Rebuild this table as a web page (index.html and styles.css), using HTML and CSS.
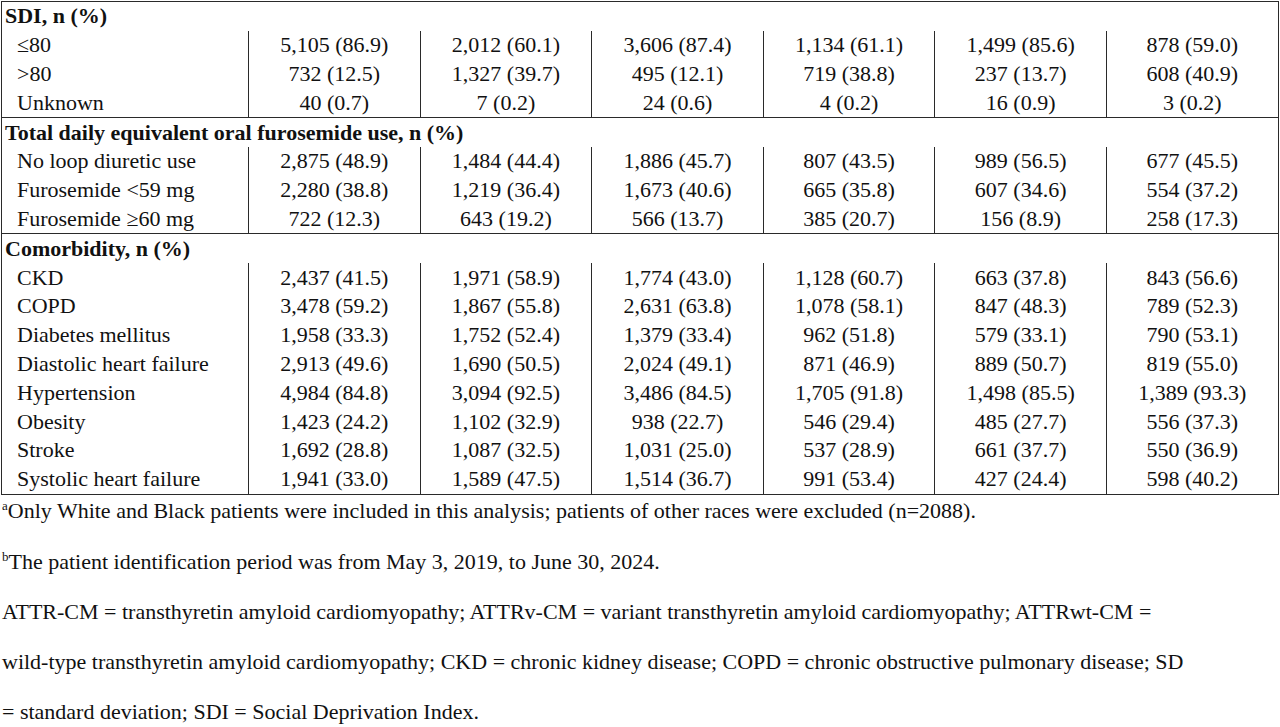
FILE: index.html
```html
<!DOCTYPE html>
<html>
<head>
<meta charset="utf-8">
<link rel="stylesheet" href="styles.css">
</head>
<body>
<table class="data">
<colgroup>
<col class="c-label"><col class="c-num"><col class="c-num"><col class="c-num"><col class="c-num"><col class="c-num"><col class="c-num">
</colgroup>
<tbody>
<tr class="sec first"><td colspan="7">SDI, n (%)</td></tr>
<tr><td class="lab">≤80</td><td>5,105 (86.9)</td><td>2,012 (60.1)</td><td>3,606 (87.4)</td><td>1,134 (61.1)</td><td>1,499 (85.6)</td><td>878 (59.0)</td></tr>
<tr><td class="lab">&gt;80</td><td>732 (12.5)</td><td>1,327 (39.7)</td><td>495 (12.1)</td><td>719 (38.8)</td><td>237 (13.7)</td><td>608 (40.9)</td></tr>
<tr><td class="lab">Unknown</td><td>40 (0.7)</td><td>7 (0.2)</td><td>24 (0.6)</td><td>4 (0.2)</td><td>16 (0.9)</td><td>3 (0.2)</td></tr>
<tr class="sec"><td colspan="7">Total daily equivalent oral furosemide use, n (%)</td></tr>
<tr><td class="lab">No loop diuretic use</td><td>2,875 (48.9)</td><td>1,484 (44.4)</td><td>1,886 (45.7)</td><td>807 (43.5)</td><td>989 (56.5)</td><td>677 (45.5)</td></tr>
<tr><td class="lab">Furosemide &lt;59 mg</td><td>2,280 (38.8)</td><td>1,219 (36.4)</td><td>1,673 (40.6)</td><td>665 (35.8)</td><td>607 (34.6)</td><td>554 (37.2)</td></tr>
<tr><td class="lab">Furosemide ≥60 mg</td><td>722 (12.3)</td><td>643 (19.2)</td><td>566 (13.7)</td><td>385 (20.7)</td><td>156 (8.9)</td><td>258 (17.3)</td></tr>
<tr class="sec"><td colspan="7">Comorbidity, n (%)</td></tr>
<tr><td class="lab">CKD</td><td>2,437 (41.5)</td><td>1,971 (58.9)</td><td>1,774 (43.0)</td><td>1,128 (60.7)</td><td>663 (37.8)</td><td>843 (56.6)</td></tr>
<tr><td class="lab">COPD</td><td>3,478 (59.2)</td><td>1,867 (55.8)</td><td>2,631 (63.8)</td><td>1,078 (58.1)</td><td>847 (48.3)</td><td>789 (52.3)</td></tr>
<tr><td class="lab">Diabetes mellitus</td><td>1,958 (33.3)</td><td>1,752 (52.4)</td><td>1,379 (33.4)</td><td>962 (51.8)</td><td>579 (33.1)</td><td>790 (53.1)</td></tr>
<tr><td class="lab">Diastolic heart failure</td><td>2,913 (49.6)</td><td>1,690 (50.5)</td><td>2,024 (49.1)</td><td>871 (46.9)</td><td>889 (50.7)</td><td>819 (55.0)</td></tr>
<tr><td class="lab">Hypertension</td><td>4,984 (84.8)</td><td>3,094 (92.5)</td><td>3,486 (84.5)</td><td>1,705 (91.8)</td><td>1,498 (85.5)</td><td>1,389 (93.3)</td></tr>
<tr><td class="lab">Obesity</td><td>1,423 (24.2)</td><td>1,102 (32.9)</td><td>938 (22.7)</td><td>546 (29.4)</td><td>485 (27.7)</td><td>556 (37.3)</td></tr>
<tr><td class="lab">Stroke</td><td>1,692 (28.8)</td><td>1,087 (32.5)</td><td>1,031 (25.0)</td><td>537 (28.9)</td><td>661 (37.7)</td><td>550 (36.9)</td></tr>
<tr><td class="lab">Systolic heart failure</td><td>1,941 (33.0)</td><td>1,589 (47.5)</td><td>1,514 (36.7)</td><td>991 (53.4)</td><td>427 (24.4)</td><td>598 (40.2)</td></tr>
</tbody>
</table>
<div class="notes">
<p class="note note-a"><sup>a</sup>Only White and Black patients were included in this analysis; patients of other races were excluded (n=2088).</p>
<p class="note"><sup>b</sup>The patient identification period was from May 3, 2019, to June 30, 2024.</p>
<p class="note">ATTR-CM = transthyretin amyloid cardiomyopathy; ATTRv-CM = variant transthyretin amyloid cardiomyopathy; ATTRwt-CM =<br>wild-type transthyretin amyloid cardiomyopathy; CKD = chronic kidney disease; COPD = chronic obstructive pulmonary disease; SD<br>= standard deviation; SDI = Social Deprivation Index.</p>
</div>
</body>
</html>
```

FILE: styles.css
```css
html, body {
  margin: 0;
  padding: 0;
  background: #ffffff;
}
body {
  font-family: "Liberation Serif", "Times New Roman", serif;
  font-size: 22px;
  color: #111111;
}
.data {
  border-collapse: collapse;
  table-layout: fixed;
  width: 1277px;
  margin: 1px 0 0 1px;
  border: 1px solid #2a2a2a;
}
.c-label { width: 247px; }
.c-num { width: 171.6px; }
.data td {
  height: 28.8px;
  padding: 0;
  text-align: center;
  vertical-align: middle;
  white-space: nowrap;
  line-height: 28px;
  border-left: 1px solid #2a2a2a;
}
.data td.lab {
  text-align: left;
  padding-left: 15px;
  border-left: none;
}
.data tr.sec td {
  text-align: left;
  font-weight: bold;
  padding-left: 3px;
  border-left: none;
  border-top: 1px solid #2a2a2a;
}
.notes {
  padding-left: 2px;
}
.note {
  margin: 0;
  line-height: 50px;
  white-space: nowrap;
}
.note-a {
  line-height: 32px;
  margin-bottom: 10px;
}
.note sup {
  font-size: 13px;
  vertical-align: 8px;
  line-height: 0;
}
```
